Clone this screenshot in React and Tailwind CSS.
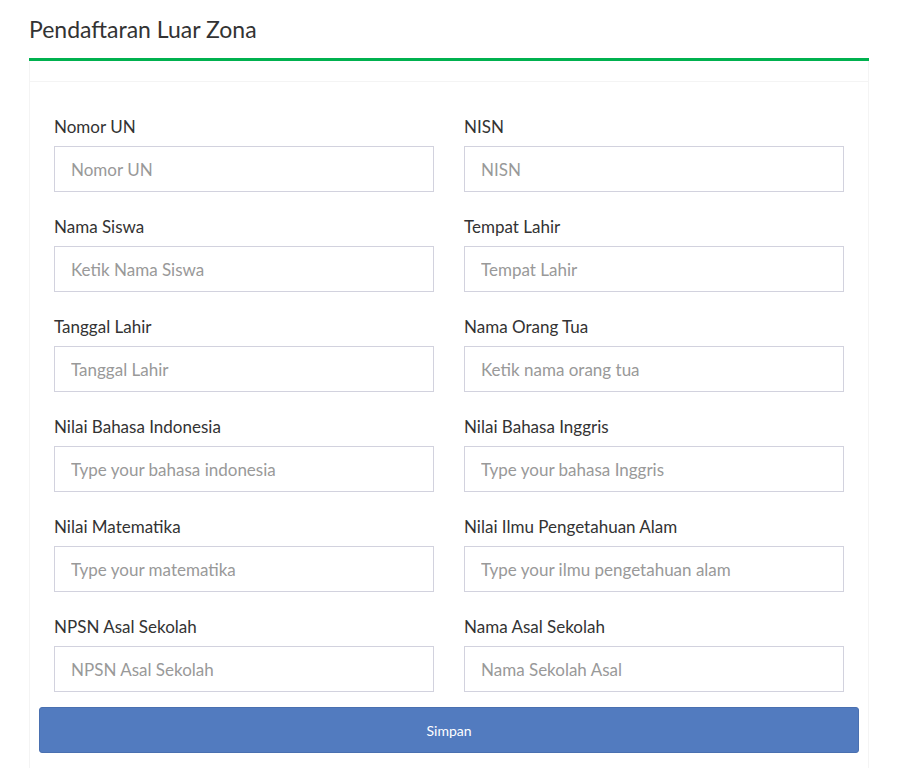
import React from 'react';

const fields = [
  ['Nomor UN', 'Nomor UN', 'NISN', 'NISN'],
  ['Nama Siswa', 'Ketik Nama Siswa', 'Tempat Lahir', 'Tempat Lahir'],
  ['Tanggal Lahir', 'Tanggal Lahir', 'Nama Orang Tua', 'Ketik nama orang tua'],
  ['Nilai Bahasa Indonesia', 'Type your bahasa indonesia', 'Nilai Bahasa Inggris', 'Type your bahasa Inggris'],
  ['Nilai Matematika', 'Type your matematika', 'Nilai Ilmu Pengetahuan Alam', 'Type your ilmu pengetahuan alam'],
  ['NPSN Asal Sekolah', 'NPSN Asal Sekolah', 'Nama Asal Sekolah', 'Nama Sekolah Asal'],
];

function Field({ label, placeholder }) {
  return (
    <div className="px-[15px] mb-6">
      <label className="block h-[22px] leading-[22px] text-[17px] text-[#333] mb-2">{label}</label>
      <input
        className="block w-full h-[46px] border border-[#d2d2de] px-4 text-[17px] text-[#333] placeholder:text-[#999] outline-none"
        placeholder={placeholder}
      />
    </div>
  );
}

export default function App() {
  return (
    <div className="min-h-[768px] bg-white px-[29px]" style={{ fontFamily: 'Lato, "Noto Sans", sans-serif' }}>
      <h1 className="pt-[15px] h-[58px] text-[23px] leading-[29px] text-[#333]">Pendaftaran Luar Zona</h1>
      <div className="border-t-[3px] border-[#00b14f]">
        <div className="border-x border-b border-[#f4f4f4] h-[21px]" />
        <div className="border-x border-[#f4f4f4] px-[9px] pt-[34px] pb-6">
          <div className="grid grid-cols-2">
            {fields.map(([l1, p1, l2, p2]) => (
              <React.Fragment key={l1}>
                <Field label={l1} placeholder={p1} />
                <Field label={l2} placeholder={p2} />
              </React.Fragment>
            ))}
          </div>
          <button className="-mt-[9px] block w-full h-[46px] rounded-[3px] bg-[#527bbf] border border-[#4a70b0] text-white text-[14px]">
            Simpan
          </button>
        </div>
      </div>
    </div>
  );
}
